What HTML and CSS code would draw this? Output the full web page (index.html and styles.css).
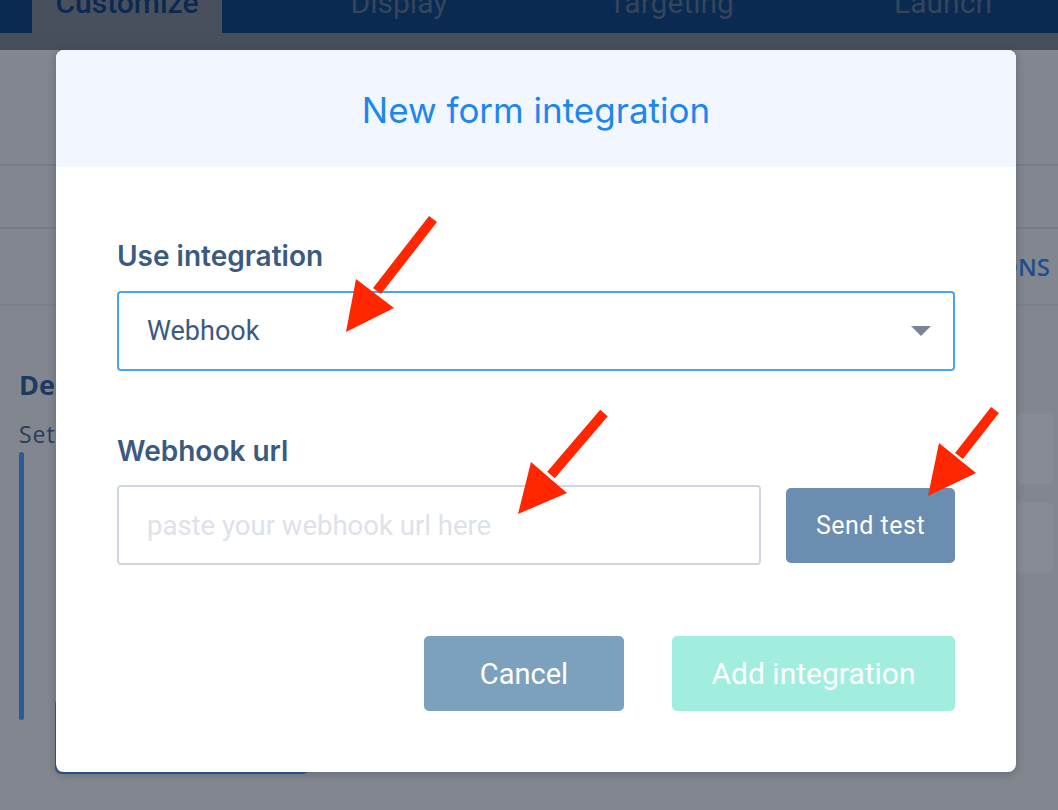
FILE: index.html
```html
<!DOCTYPE html>
<html lang="en">
<head>
    <meta charset="UTF-8">
    <meta name="viewport" content="width=device-width, initial-scale=1.0">
    <title>New form integration</title>
    <link rel="stylesheet" href="styles.css">
</head>
<body>
    <div class="app">
        <nav class="nav">
            <div class="tab active">Customize</div>
            <div class="tab">Display</div>
            <div class="tab">Targeting</div>
            <div class="tab">Launch</div>
        </nav>
        <div class="band"></div>
        <div class="panel-head"></div>
        <div class="panel-row"></div>
        <div class="panel-tabs"><span class="tabs-link">OPTIONS</span></div>
        <div class="content">
            <div class="content-left">
                <h2 class="section-title">Design</h2>
                <p class="section-sub">Settings</p>
                <div class="steps">
                    <div class="step-bar"></div>
                    <div class="step-box"></div>
                </div>
            </div>
            <div class="content-right">
                <div class="ghost"></div>
                <div class="ghost"></div>
            </div>
        </div>
    </div>

    <div class="modal">
        <div class="modal-header">
            <h1>New form integration</h1>
        </div>
        <div class="modal-body">
            <label class="field-label" for="integration">Use integration</label>
            <div class="select-wrap">
                <select id="integration">
                    <option selected>Webhook</option>
                    <option>Zapier</option>
                    <option>Mailchimp</option>
                </select>
                <span class="caret"></span>
            </div>

            <label class="field-label second" for="webhook">Webhook url</label>
            <div class="url-row">
                <input type="text" id="webhook" placeholder="paste your webhook url here">
                <button class="btn btn-test">Send test</button>
            </div>

            <div class="modal-footer">
                <button class="btn btn-cancel">Cancel</button>
                <button class="btn btn-add">Add integration</button>
            </div>
        </div>
    </div>

    <svg class="arrows" width="1058" height="810" viewBox="0 0 1058 810">
        <g fill="#ff2600" stroke="#ff2600">
            <line x1="433" y1="219" x2="377" y2="291" stroke-width="10"/>
            <polygon points="346,332 356,279 394,308" stroke="none"/>
            <line x1="604" y1="413" x2="551" y2="475" stroke-width="10"/>
            <polygon points="518,514 531,462 567,493" stroke="none"/>
            <line x1="995" y1="410" x2="959" y2="456" stroke-width="10"/>
            <polygon points="928,496 939,443 976,473" stroke="none"/>
        </g>
    </svg>
</body>
</html>
```

FILE: styles.css
```css
body {
    margin: 0;
    background-color: #81868f;
    font-family: Inter, "Noto Sans", sans-serif;
    overflow: hidden;
}
.app {
    width: 1058px;
    height: 810px;
    background-color: #81868f;
}
.nav {
    height: 33px;
    background-color: #0b2a52;
    display: flex;
    padding-left: 32px;
    overflow: hidden;
}
.tab {
    flex-shrink: 0;
    width: 190px;
    margin-right: 82px;
    font-family: Roboto, sans-serif;
    font-size: 30px;
    line-height: 30px;
    margin-top: -12px;
    text-align: center;
    color: #34455c;
}
.tab.active {
    background-color: #484f5d;
    color: #0b2a52;
    font-weight: 500;
    height: 45px;
}
.band {
    height: 17px;
    background-color: #474e5c;
}
.panel-head {
    height: 114px;
    border-bottom: 2px solid #777c86;
}
.panel-row {
    height: 61px;
    border-bottom: 2px solid #777c86;
}
.panel-tabs {
    height: 75px;
    border-bottom: 2px solid #7a7f89;
    display: flex;
    align-items: center;
    justify-content: flex-end;
    padding-right: 8px;
}
.tabs-link {
    font-family: "Open Sans", sans-serif;
    font-size: 24px;
    font-weight: 600;
    color: #1d4f8c;
}
.content {
    display: flex;
    justify-content: space-between;
}
.content-left {
    padding-left: 19px;
    padding-top: 62px;
}
.section-title {
    margin: 0;
    font-family: "Open Sans", sans-serif;
    font-size: 27px;
    font-weight: 700;
    color: #1f3a60;
    line-height: 34px;
}
.section-sub {
    margin: 18px 0 0;
    font-family: "Open Sans", sans-serif;
    font-size: 23px;
    letter-spacing: 1px;
    color: #2a3d5c;
    line-height: 28px;
}
.steps {
    display: flex;
    margin-top: 4px;
    gap: 31px;
}
.step-bar {
    width: 5px;
    height: 268px;
    border-radius: 3px;
    background-color: #2d5a96;
}
.step-box {
    width: 250px;
    height: 72px;
    margin-top: 246px;
    border: 2px solid #2d5a96;
    border-radius: 6px;
}
.content-right {
    padding-top: 108px;
    padding-right: 5px;
    display: flex;
    flex-direction: column;
    gap: 19px;
}
.ghost {
    width: 36px;
    height: 70px;
    border-radius: 4px;
    background-color: #868b95;
}

/* modal */
.modal {
    position: absolute;
    left: 56px;
    top: 50px;
    width: 960px;
    height: 722px;
    background: #fff;
    border-radius: 8px;
    overflow: hidden;
    box-shadow: 0 2px 10px rgba(0, 0, 0, 0.2);
}
.modal-header {
    height: 117px;
    background-color: #f2f6fe;
    display: flex;
    align-items: center;
    justify-content: center;
}
.modal-header h1 {
    margin: 0;
    font-size: 35px;
    font-weight: 400;
    color: #1d87f0;
    padding-top: 2px;
}
.modal-body {
    padding: 74px 61px 0;
}
.field-label {
    display: block;
    font-size: 28px;
    font-weight: 600;
    line-height: 30px;
    color: #3b5a80;
}
.field-label.second {
    margin-top: 65px;
}
.select-wrap {
    position: relative;
    margin-top: 20px;
}
select, input {
    display: block;
    box-sizing: border-box;
    width: 100%;
    height: 80px;
    padding: 0 28px;
    font-family: Roboto, sans-serif;
    font-size: 27px;
    color: #3b5a80;
    background: #fff;
    border-radius: 4px;
    outline: none;
}
select {
    appearance: none;
    -webkit-appearance: none;
    border: 2px solid #44a6f2;
}
.caret {
    position: absolute;
    right: 24px;
    top: 35px;
    width: 0;
    height: 0;
    border-left: 10px solid transparent;
    border-right: 10px solid transparent;
    border-top: 10px solid #7b8494;
}
.url-row {
    display: flex;
    align-items: center;
    gap: 25px;
    margin-top: 19px;
}
input {
    flex: 1;
    font-size: 27.5px;
    border: 2px solid #cfd7e0;
}
input::placeholder {
    color: #dde2ea;
}
.btn {
    font-family: Roboto, sans-serif;
    color: #fff;
    border: none;
    border-radius: 5px;
    cursor: pointer;
}
.btn-test {
    width: 169px;
    height: 75px;
    font-size: 25px;
    letter-spacing: 0.5px;
    background-color: #6b8db0;
}
.modal-footer {
    display: flex;
    justify-content: flex-end;
    gap: 48px;
    margin-top: 71px;
}
.btn-cancel, .btn-add {
    height: 75px;
    font-size: 29px;
}
.btn-cancel {
    width: 200px;
    background-color: #7ca1bd;
}
.btn-add {
    width: 283px;
    font-size: 30px;
    background-color: #a1eedf;
}
.arrows {
    position: absolute;
    left: 0;
    top: 0;
    pointer-events: none;
}
```
